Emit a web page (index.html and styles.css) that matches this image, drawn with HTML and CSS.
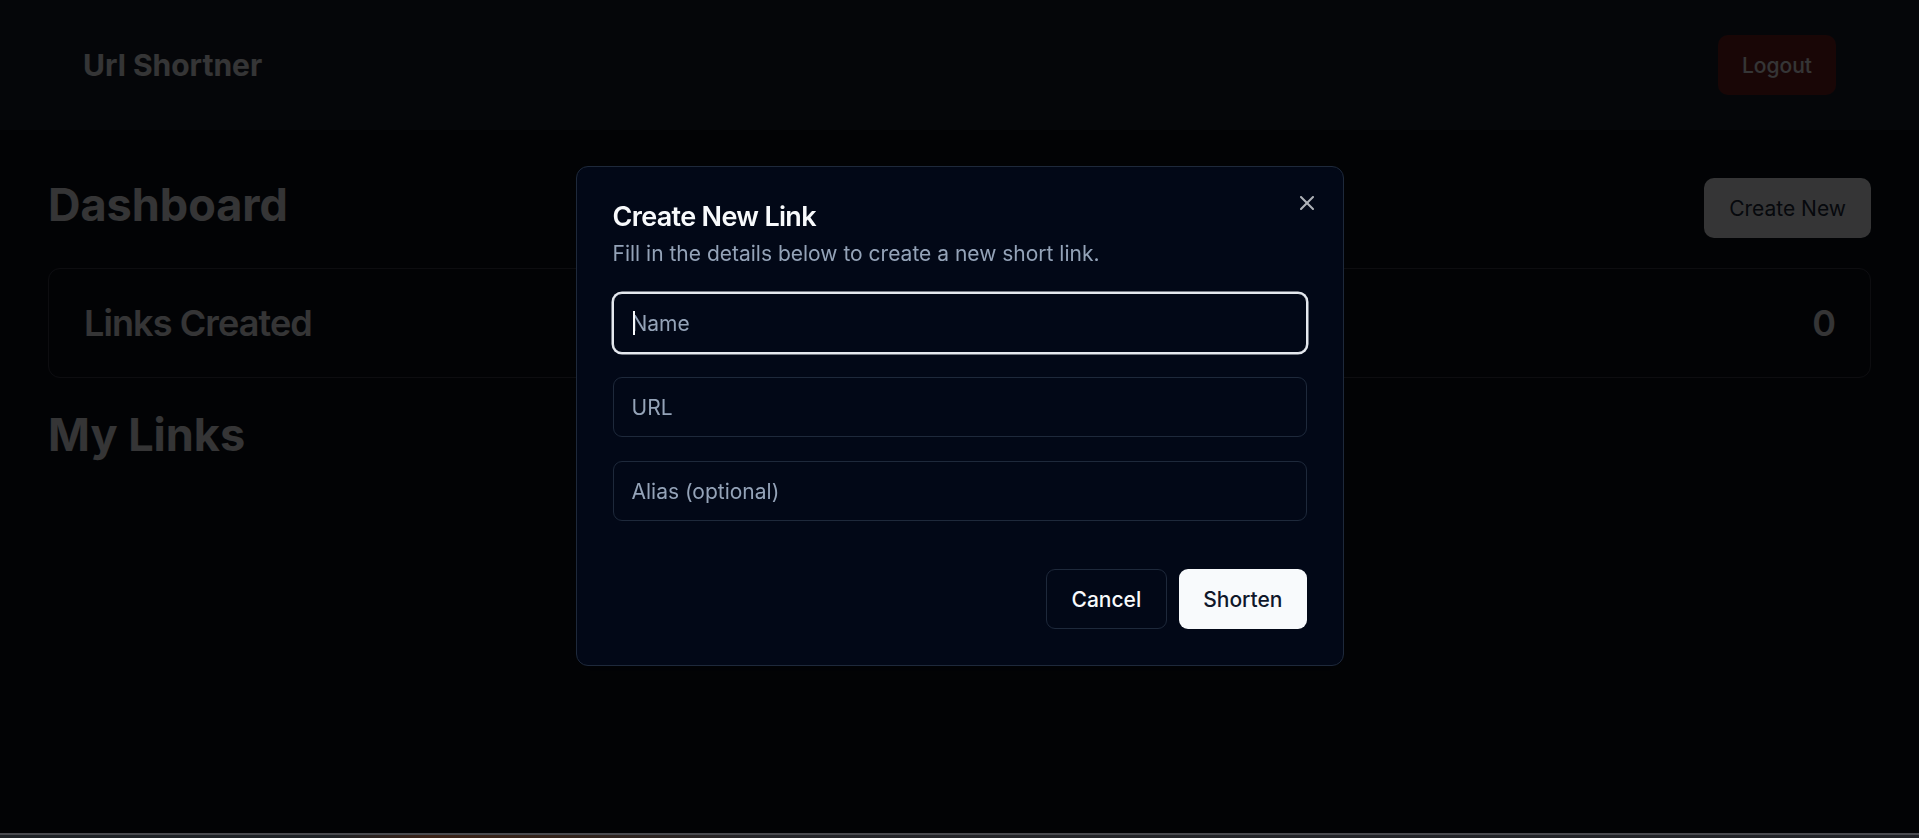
FILE: index.html
```html
<!DOCTYPE html>
<html lang="en">
<head>
<meta charset="utf-8">
<title>Url Shortner</title>
<link rel="stylesheet" href="styles.css">
</head>
<body>
<header class="topbar">
  <div class="brand">Url Shortner</div>
  <button class="btn-logout" type="button">Logout</button>
</header>
<main class="main">
  <div class="page-head">
    <h1 class="page-title">Dashboard</h1>
    <button class="btn-create" type="button">Create New</button>
  </div>
  <div class="stat-card">
    <span class="stat-label">Links Created</span>
    <span class="stat-value">0</span>
  </div>
  <h2 class="section-title">My Links</h2>
</main>
<div class="overlay">
  <div class="dialog" role="dialog" aria-labelledby="dlg-title">
    <button class="dialog-close" type="button" aria-label="Close">
      <svg viewBox="0 0 24 24" width="24" height="24" fill="none" stroke="currentColor" stroke-width="2" stroke-linecap="round" stroke-linejoin="round"><path d="M18 6 6 18"/><path d="m6 6 12 12"/></svg>
    </button>
    <div class="dialog-header">
      <h2 class="dialog-title" id="dlg-title">Create New Link</h2>
      <p class="dialog-desc">Fill in the details below to create a new short link.</p>
    </div>
    <form class="dialog-form">
      <div class="field">
        <input class="input input-focus" type="text" placeholder="Name">
        <span class="caret"></span>
      </div>
      <input class="input" type="text" placeholder="URL">
      <input class="input" type="text" placeholder="Alias (optional)">
      <div class="dialog-footer">
        <button type="button" class="btn btn-outline">Cancel</button>
        <button type="button" class="btn btn-primary">Shorten</button>
      </div>
    </form>
  </div>
</div>
<div class="screen-edge"></div>
</body>
</html>
```

FILE: styles.css
```css
html, body {
  margin: 0;
  height: 100%;
}

body {
  background: #0a0f1a;
  color: #f8fafc;
  font-family: "Inter", "Noto Sans", sans-serif;
  overflow: hidden;
}

.topbar {
  box-sizing: border-box;
  height: 130px;
  padding: 0 83px;
  display: flex;
  align-items: center;
  justify-content: space-between;
  background: #1b202d;
}

.brand {
  font-size: 30px;
  line-height: 40px;
  font-weight: 700;
  color: #f8fafc;
}

.btn-logout {
  height: 60px;
  padding: 0 24px;
  border: none;
  border-radius: 10px;
  background: #762020;
  color: #f8fafc;
  font-family: inherit;
  font-size: 21px;
  font-weight: 500;
}

.main {
  padding: 48px;
}

.page-head {
  display: flex;
  justify-content: space-between;
  align-items: flex-start;
  margin-bottom: 30px;
}

.page-title {
  margin: 0;
  font-size: 45px;
  line-height: 54px;
  font-weight: 700;
  color: #f8fafc;
}

.btn-create {
  height: 60px;
  padding: 0 25px;
  border: none;
  border-radius: 10px;
  background: #f8fafc;
  color: #1e2a40;
  font-family: inherit;
  font-size: 21px;
  font-weight: 400;
}

.stat-card {
  display: flex;
  justify-content: space-between;
  align-items: center;
  padding: 30px 35px;
  border: 1px solid #40404f;
  border-radius: 12px;
  font-size: 36px;
  line-height: 48px;
  font-weight: 600;
  letter-spacing: -0.025em;
  color: #f8fafc;
}

.section-title {
  margin: 30px 0 0;
  font-size: 45px;
  line-height: 54px;
  font-weight: 700;
  color: #f8fafc;
}

.overlay {
  position: fixed;
  inset: 0;
  background: rgba(0, 0, 0, 0.79);
  display: flex;
  align-items: center;
  justify-content: center;
  z-index: 10;
}

.dialog {
  position: relative;
  box-sizing: border-box;
  width: 768px;
  padding: 36px;
  margin-bottom: 6px;
  border: 1px solid #1e293b;
  border-radius: 12px;
  background: #020817;
  box-shadow: 0 15px 22px -4px rgba(0, 0, 0, 0.1), 0 6px 9px -5px rgba(0, 0, 0, 0.1);
}

.dialog-close {
  position: absolute;
  top: 24px;
  right: 24px;
  width: 24px;
  height: 24px;
  padding: 0;
  border: none;
  background: none;
  color: #f8fafc;
  opacity: 0.7;
  display: flex;
}

.dialog-title {
  margin: 0;
  font-size: 27px;
  line-height: 27px;
  font-weight: 600;
  letter-spacing: -0.025em;
  color: #f8fafc;
}

.dialog-desc {
  margin: 9px 0 0;
  font-size: 21px;
  line-height: 30px;
  color: #94a3b8;
}

.dialog-form {
  display: flex;
  flex-direction: column;
  gap: 24px;
  margin: 24px 0 0;
}

.field {
  position: relative;
  display: flex;
}

.input {
  box-sizing: border-box;
  width: 100%;
  height: 60px;
  padding: 0 18px;
  border: 1px solid #1e293b;
  border-radius: 9px;
  background: #020817;
  color: #f8fafc;
  font-family: inherit;
  font-size: 21px;
  outline: none;
}

.input::placeholder {
  color: #94a3b8;
}

.input-focus {
  border-color: #e5e9ef;
  box-shadow: 0 0 0 1.5px #e5e9ef;
}

.caret {
  position: absolute;
  left: 20px;
  top: 18px;
  width: 2px;
  height: 24px;
  background: #f8fafc;
}

.dialog-footer {
  display: flex;
  justify-content: flex-end;
  gap: 12px;
  margin-top: 24px;
}

.btn {
  box-sizing: border-box;
  height: 60px;
  border-radius: 9px;
  font-family: inherit;
  font-size: 21px;
  font-weight: 500;
}

.btn-outline {
  padding: 0 25px;
  border: 1px solid #1e293b;
  background: #020817;
  color: #f8fafc;
}

.btn-primary {
  padding: 0 24px;
  border: none;
  background: #f8fafc;
  color: #0f172a;
}

.screen-edge {
  position: fixed;
  left: 0;
  right: 0;
  bottom: 0;
  height: 3px;
  border-top: 2px solid #4a4b50;
  background: linear-gradient(90deg, #1f2327 0, #1f2327 330px, #3b2318 430px, #33241c 560px, #25262a 760px, #222428 100%);
  z-index: 20;
}
```
